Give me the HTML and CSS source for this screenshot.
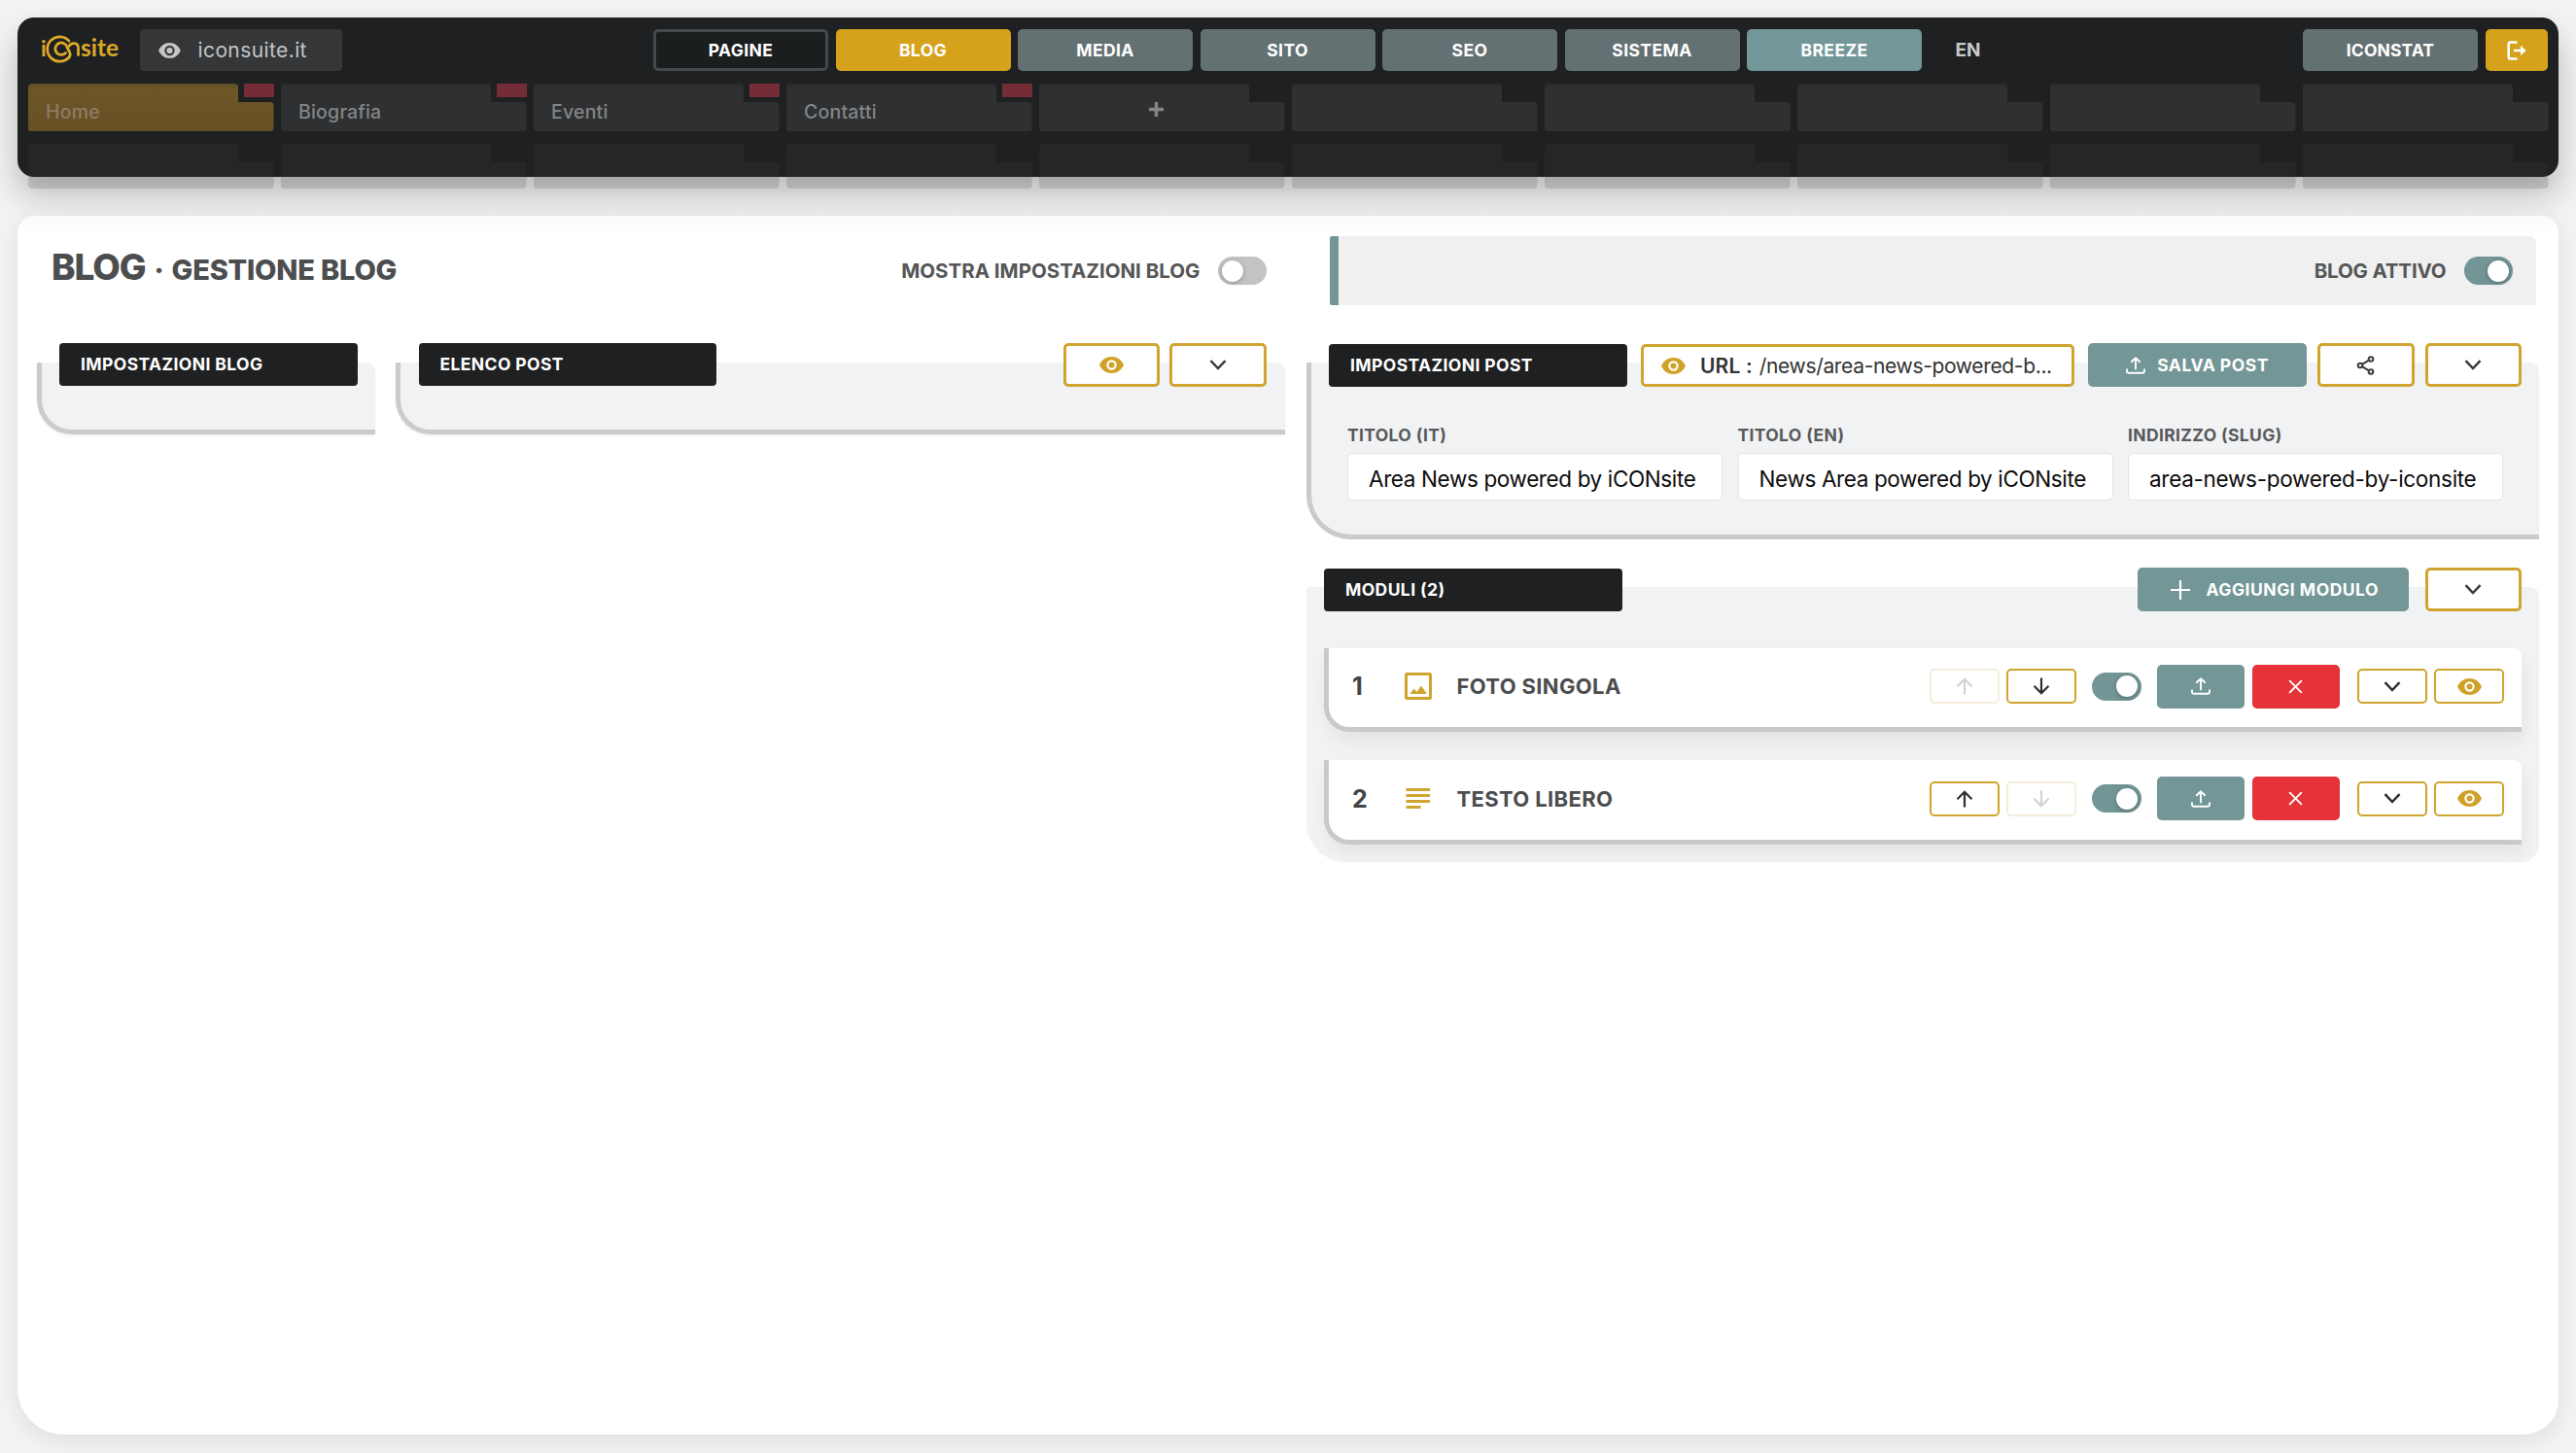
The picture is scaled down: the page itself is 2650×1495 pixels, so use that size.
FILE: index.html
```html
<!DOCTYPE html>
<html lang="it">
<head>
<meta charset="utf-8">
<title>iCONsite - Gestione blog</title>
<link rel="stylesheet" href="styles.css">
</head>
<body>
<svg class="sprite" width="0" height="0" aria-hidden="true">
  <symbol id="eye" viewBox="0 0 24 17"><path fill="currentColor" fill-rule="evenodd" d="M12 0C6.500 0 1.900 3.500 0 8.500 1.900 13.500 6.500 17 12 17s10.100-3.500 12-8.500C22.100 3.500 17.500 0 12 0Zm0 14a5.500 5.500 0 1 1 0-11 5.500 5.500 0 0 1 0 11Zm0-2.200a3.300 3.300 0 1 0 0-6.600 3.300 3.300 0 0 0 0 6.600Z"/></symbol>
  <symbol id="eye-gold" viewBox="0 0 25 17"><path fill="currentColor" fill-rule="evenodd" d="M12.500 0C7 0 2.200 3.300 0 8.500 2.200 13.700 7 17 12.500 17S22.800 13.700 25 8.500C22.800 3.300 18 0 12.500 0Zm0 13.700a5.200 5.200 0 1 1 0-10.400 5.200 5.200 0 0 1 0 10.400Zm0-2.200a3 3 0 1 0 0-6 3 3 0 0 0 0 6Z"/></symbol>
  <symbol id="chevron" viewBox="0 0 18 11"><path fill="none" stroke="currentColor" stroke-width="2.500" d="M1.500 1.200 9 9 16.500 1.200"/></symbol>
  <symbol id="up" viewBox="0 0 18 18"><path fill="none" stroke="currentColor" stroke-width="2.200" d="M9 17.500V2M1.500 9.300 9 1.800l7.500 7.500"/></symbol>
  <symbol id="down" viewBox="0 0 18 18"><path fill="none" stroke="currentColor" stroke-width="2.200" d="M9 .5V16M1.500 8.700 9 16.200l7.500-7.500"/></symbol>
  <symbol id="upload" viewBox="0 0 20 18"><path fill="none" stroke="currentColor" stroke-width="1.900" stroke-linecap="round" stroke-linejoin="round" d="M1 13.200V15a1.800 1.800 0 0 0 1.800 1.800h14.400A1.800 1.800 0 0 0 19 15v-1.800M10 12.500V1.500M5.800 5.200 10 1.200l4.200 4"/></symbol>
  <symbol id="cross" viewBox="0 0 16 16"><path fill="none" stroke="currentColor" stroke-width="2" d="m1.200 1.200 13.600 13.600m0-13.600L1.200 14.800"/></symbol>
</svg>

<header class="topbar">
  <div class="bar">
    <svg class="logo" viewBox="0 0 84 30" aria-label="iConsite">
      <g fill="none" stroke="currentColor" stroke-width="2.800" stroke-linecap="round">
        <path d="M31 6.200A12.700 12.700 0 1 0 31 22.800"/>
        <path d="M27.500 18.500A6.200 6.200 0 1 1 29 12.500L31.500 17.500C33.500 21 31 24 28.500 25"/>
        <path d="M31 11.500C33 7.500 40.500 7 40.500 13.500V20.500"/>
      </g>
      <g fill="currentColor" font-family="Lato, sans-serif" font-weight="700" font-size="24">
        <text x="2" y="21.500" font-size="22">i</text>
        <text x="43" y="21.500" textLength="39" lengthAdjust="spacingAndGlyphs">site</text>
      </g>
    </svg>
    <div class="domain"><svg><use href="#eye"/></svg><span>iconsuite.it</span></div>
    <nav class="menu">
      <a class="outline">PAGINE</a><a class="gold">BLOG</a><a>MEDIA</a><a>SITO</a><a>SEO</a><a>SISTEMA</a><a class="teal">BREEZE</a>
      <span class="lang">EN</span>
    </nav>
    <div class="tools">
      <a class="stat">ICONSTAT</a>
      <a class="exit"><svg viewBox="0 0 20 20"><path fill="none" stroke="currentColor" stroke-width="2.600" d="M10.500 1.500H3.500Q1.700 1.500 1.700 3.300V16.700Q1.700 18.500 3.500 18.500H10.500M7 10H16"/><path fill="currentColor" d="m14 4.800 5.600 5.200-5.600 5.200Z"/></svg></a>
    </div>
  </div>
  <div class="tabs">
    <div class="cell"><div class="tab current">Home</div><i class="flag"></i></div>
    <div class="cell"><div class="tab">Biografia</div><i class="flag"></i></div>
    <div class="cell"><div class="tab">Eventi</div><i class="flag"></i></div>
    <div class="cell"><div class="tab">Contatti</div><i class="flag"></i></div>
    <div class="cell"><div class="tab add"><svg viewBox="0 0 16 16"><path stroke="currentColor" stroke-width="3.600" d="M8 0V16M0 8H16"/></svg></div></div>
    <div class="cell"><div class="tab"></div></div>
    <div class="cell"><div class="tab"></div></div>
    <div class="cell"><div class="tab"></div></div>
    <div class="cell"><div class="tab"></div></div>
    <div class="cell"><div class="tab"></div></div>
  </div>
  <div class="tabs ghost">
    <div class="tab"></div><div class="tab"></div><div class="tab"></div><div class="tab"></div><div class="tab"></div>
    <div class="tab"></div><div class="tab"></div><div class="tab"></div><div class="tab"></div><div class="tab"></div>
  </div>
</header>

<main class="page">
  <div class="column">
    <div class="heading">
      <h1>BLOG<small class="dot">·</small><small>GESTIONE BLOG</small></h1>
      <span class="switch-label">MOSTRA IMPOSTAZIONI BLOG</span>
      <span class="switch off"></span>
    </div>
    <div class="pair">
      <section class="panel closed">
        <div class="head"><h2 class="tag">IMPOSTAZIONI BLOG</h2></div>
      </section>
      <section class="panel closed list">
        <div class="head"><h2 class="tag">ELENCO POST</h2>
          <div class="actions"><button class="btn line"><svg class="i-eye"><use href="#eye-gold"/></svg></button><button class="btn line"><svg class="i-chev"><use href="#chevron"/></svg></button></div>
        </div>
      </section>
    </div>
  </div>

  <div class="column">
    <div class="status"><span class="switch-label">BLOG ATTIVO</span><span class="switch"></span></div>
    <section class="panel post">
      <div class="head"><h2 class="tag">IMPOSTAZIONI POST</h2>
        <div class="actions">
          <div class="url"><svg class="i-eye"><use href="#eye-gold"/></svg><b>URL :</b><span>/news/area-news-powered-b...</span></div>
          <button class="btn fill save"><svg class="i-upload"><use href="#upload"/></svg><span>SALVA POST</span></button>
          <button class="btn line"><svg class="i-share" viewBox="0 0 18 20"><g fill="none" stroke="currentColor" stroke-width="2"><circle cx="14.500" cy="3.500" r="2.300"/><circle cx="3.500" cy="10" r="2.300"/><circle cx="14.500" cy="16.500" r="2.300"/><path d="m5.500 8.800 7-4.100M5.500 11.200l7 4.100"/></g></svg></button>
          <button class="btn line"><svg class="i-chev"><use href="#chevron"/></svg></button>
        </div>
      </div>
      <div class="fields">
        <div class="field"><label>TITOLO (IT)</label><div class="input">Area News powered by iCONsite</div></div>
        <div class="field"><label>TITOLO (EN)</label><div class="input">News Area powered by iCONsite</div></div>
        <div class="field"><label>INDIRIZZO (SLUG)</label><div class="input slug">area-news-powered-by-iconsite</div></div>
      </div>
    </section>

    <section class="panel modules">
      <div class="head"><h2 class="tag">MODULI (2)</h2>
        <div class="actions">
          <button class="btn fill add-module"><svg class="i-plus" viewBox="0 0 20 20"><path stroke="currentColor" stroke-width="2.200" d="M10 0V20M0 10H20"/></svg><span>AGGIUNGI MODULO</span></button>
          <button class="btn line"><svg class="i-chev"><use href="#chevron"/></svg></button>
        </div>
      </div>
      <div class="rows">
        <article class="module">
          <b class="num">1</b>
          <svg class="kind" viewBox="0 0 30 30"><path fill="none" stroke="currentColor" stroke-width="3" d="M3.500 2.500h23q1 0 1 1v23q0 1-1 1h-23q-1 0-1-1v-23q0-1 1-1Z"/><path fill="currentColor" d="m6.500 23 4-5.500 3 3.500 4.500-6.500 6 8.500Z"/></svg>
          <h3>FOTO SINGOLA</h3>
          <button class="btn small faded"><svg class="i-arrow"><use href="#up"/></svg></button>
          <button class="btn small"><svg class="i-arrow"><use href="#down"/></svg></button>
          <span class="switch"></span>
          <button class="btn fill act"><svg class="i-upload"><use href="#upload"/></svg></button>
          <button class="btn fill act red"><svg class="i-cross"><use href="#cross"/></svg></button>
          <button class="btn small gap"><svg class="i-chev"><use href="#chevron"/></svg></button>
          <button class="btn small"><svg class="i-eye"><use href="#eye-gold"/></svg></button>
        </article>
        <article class="module">
          <b class="num">2</b>
          <svg class="kind" viewBox="0 0 30 30"><path stroke="currentColor" stroke-width="3" d="M2.500 5.400H27M2.500 11.400H27M2.500 17.400H27M2.500 23.400H17.500"/></svg>
          <h3>TESTO LIBERO</h3>
          <button class="btn small"><svg class="i-arrow"><use href="#up"/></svg></button>
          <button class="btn small faded"><svg class="i-arrow"><use href="#down"/></svg></button>
          <span class="switch"></span>
          <button class="btn fill act"><svg class="i-upload"><use href="#upload"/></svg></button>
          <button class="btn fill act red"><svg class="i-cross"><use href="#cross"/></svg></button>
          <button class="btn small gap"><svg class="i-chev"><use href="#chevron"/></svg></button>
          <button class="btn small"><svg class="i-eye"><use href="#eye-gold"/></svg></button>
        </article>
      </div>
    </section>
  </div>
</main>
</body>
</html>
```
FILE: styles.css
```css
* { box-sizing: border-box; }
body {
  margin: 0;
  padding: 18px 18px 0;
  height: 1495px;
  overflow: hidden;
  background: #f3f3f3;
  font-family: Inter, "Liberation Sans", sans-serif;
  color: #4c4d4e;
}
.sprite { display: block; }
h1, h2, h3 { margin: 0; }
svg { display: block; flex: none; }
button { font: inherit; padding: 0; margin: 0; }

/* top bar */
.topbar {
  position: relative;
  height: 164px;
  padding: 12px 11px 0;
  border-radius: 17px;
  background: #1e2022;
  box-shadow: 0 18px 34px rgba(0, 0, 0, .24);
}
.bar { display: flex; height: 43px; align-items: stretch; }
.logo { width: 84px; height: 30px; margin: 6px 0 0 11px; color: #dba827; overflow: visible; }
.domain {
  display: flex;
  align-items: center;
  width: 208px;
  margin-left: 19.500px;
  padding-left: 19px;
  border-radius: 4px;
  background: #343638;
  color: #c3c5c7;
  font-size: 21px;
  letter-spacing: .4px;
}
.domain svg { width: 23px; height: 16px; margin-right: 18px; }
.menu { display: flex; gap: 7.500px; margin-left: 320.500px; }
.menu a, .tools a {
  display: flex;
  align-items: center;
  justify-content: center;
  width: 180px;
  border-radius: 5px;
  background: #647173;
  color: #fff;
  font-weight: 700;
  font-size: 17.500px;
  letter-spacing: .4px;
}
.menu .outline { background: #1b1e1f; border: 3px solid #46494b; }
.menu .gold { background: #d6a21b; }
.menu .teal { background: #739798; }
.lang { align-self: center; margin-left: 27px; color: #c9cacb; font-weight: 700; font-size: 19px; }
.tools { display: flex; gap: 7.500px; margin-left: auto; }
.tools .stat { letter-spacing: .1px; }
.tools .exit { width: 64.500px; background: #d6a21b; }
.exit svg { width: 20px; height: 20px; }

.tabs { display: grid; grid-template-columns: repeat(10, 252.500px); column-gap: 7.500px; margin-top: 13px; }
.cell { position: relative; }
.tab {
  display: flex;
  align-items: center;
  height: 49px;
  padding: 9px 0 0 18px;
  background: linear-gradient(#292b2d, #2e3032 6px);
  clip-path: path("M4 0H212Q216 0 216 4V19H248.500Q252.500 19 252.500 23V46Q252.500 49 249.500 49H3Q0 49 0 46V4Q0 0 4 0Z");
  color: #838587;
  font-weight: 500;
  font-size: 19.500px;
  letter-spacing: .2px;
}
.tab.current { background: linear-gradient(#5e4e27, #6c5626 6px, #685025); color: #8d7b68; }
.tab.add { justify-content: center; padding: 4px 12px 0 0; }
.add svg { width: 15px; height: 15px; }
.flag { position: absolute; right: 0; top: 0; width: 31px; height: 14px; background: #742d36; }
.ghost .tab {
  height: 46px;
  background: rgba(64, 67, 68, .18);
  clip-path: path("M4 0H216V19H252.500V42Q252.500 46 248.500 46H4Q0 46 0 42V4Q0 0 4 0Z");
}

/* page */
.page {
  position: relative;
  display: flex;
  gap: 22px;
  height: 1254px;
  margin-top: 40px;
  padding: 21px 20px 0;
  border-radius: 18px 18px 36px 48px;
  background: linear-gradient(#fafafa, #fff 22px);
  box-shadow: 0 6px 24px rgba(0, 0, 0, .09);
}
.column:first-child { width: 1284px; }
.column:last-child { width: 1268px; }
.heading { display: flex; align-items: center; height: 71px; padding: 0 19px 0 15px; }
h1 { display: flex; align-items: baseline; margin-right: auto; padding-bottom: 8px; font-size: 37px; font-weight: 800; letter-spacing: -1.100px; }
h1 small { font-size: 29px; letter-spacing: -.200px; }
.dot { margin: 0 8px 0 9px; }
.switch-label { font-weight: 700; font-size: 20.500px; color: #555657; }
.switch { position: relative; width: 50.500px; height: 29px; border-radius: 15px; background: #739596; flex: none; }
.switch::after { content: ""; position: absolute; right: 4px; top: 3.500px; width: 22px; height: 22px; border-radius: 50%; background: #fff; box-shadow: 0 1px 4px rgba(0, 0, 0, .3); }
.switch.off { background: #c3c3c3; }
.switch.off::after { right: auto; left: 4px; }
.switch-label + .switch { margin-left: 18px; }
.status {
  display: flex;
  align-items: center;
  justify-content: flex-end;
  height: 71px;
  margin: 0 3px 0 24px;
  padding-right: 24px;
  border-left: 9.500px solid #739596;
  border-radius: 2px 8px 0 2px;
  background: #f0f0f0;
}
.status .switch-label { letter-spacing: -.15px; }

.pair { display: grid; grid-template-columns: 348px 915px; gap: 21px; }
.panel {
  display: flow-root;
  margin-top: 59px;
  padding: 0 18px;
  border: solid #cbcbcb;
  border-width: 0 0 5px 5px;
  border-radius: 0 9px 0 36px;
  background: #f1f2f4;
}
.panel.closed { height: 74px; box-shadow: 0 2px 3px rgba(0, 0, 0, .05); }
.panel.list { padding: 0 19.500px 0 18.500px; }
.list .actions { gap: 10px; }
.panel.post { height: 182px; border-bottom-left-radius: 46px; }
.post .tag { margin-top: 1px; }
.head { display: flex; align-items: flex-start; height: 45px; margin-top: -20px; }
.tag {
  display: flex;
  align-items: center;
  width: 306.500px;
  height: 43.500px;
  padding-left: 22px;
  border-radius: 4px;
  background: #1e2022;
  color: #fff;
  font-size: 17.500px;
  letter-spacing: .4px;
}
.actions { display: flex; gap: 11px; margin-left: auto; }
.btn { display: flex; align-items: center; justify-content: center; height: 45px; border: 0; border-radius: 5px; color: #3a3b3c; }
.btn.line { width: 99.500px; border: 3px solid #cfa42f; background: #fff; }
.btn.fill { background: #739697; color: #fff; font-weight: 700; font-size: 17.500px; letter-spacing: .5px; }
.save { width: 225px; }
.save svg { margin-right: 12px; }
.add-module { width: 279.500px; padding-left: 3px; }
.add-module svg { margin-right: 17px; }
.i-eye { width: 25px; height: 17px; color: #cfa129; }
.i-chev { width: 18px; height: 11px; }
.i-arrow { width: 18px; height: 18px; }
.i-upload { width: 20px; height: 18px; }
.i-cross { width: 15px; height: 15px; }
.i-share { width: 19px; height: 20px; }
.i-plus { width: 20px; height: 20px; }
.url {
  display: flex;
  align-items: center;
  width: 446px;
  height: 44px;
  margin: 1px 3px 0 0;
  padding-left: 18px;
  border: 3px solid #cfa42f;
  border-radius: 5px;
  background: #fff;
  color: #333;
  font-size: 21px;
  letter-spacing: -.34px;
  white-space: nowrap;
}
.url b { margin: 0 7px 0 15px; font-weight: 600; letter-spacing: .15px; }

.fields { display: grid; grid-template-columns: repeat(3, 386px); gap: 15.500px; margin: 38px 0 0 19px; }
.field label { display: block; height: 30px; line-height: 23px; font-weight: 700; font-size: 17.500px; letter-spacing: .35px; color: #58595a; }
.input {
  display: flex;
  align-items: center;
  height: 49px;
  padding: 3px 0 0 21px;
  border: 1.500px solid #e3e4e6;
  border-radius: 5px;
  background: #fff;
  color: #0c0c0c;
  font-size: 22.500px;
  letter-spacing: -.38px;
  white-space: nowrap;
}
.input.slug { letter-spacing: -.3px; }

.panel.modules { height: 283px; margin-top: 49px; border: 0; border-radius: 4px 9px 18px 40px; }
.modules .tag { margin-top: 1px; }
.modules .actions { gap: 16.500px; }
.rows { display: grid; gap: 29px; margin-top: 37.500px; }
.module {
  display: flex;
  align-items: center;
  height: 86.500px;
  padding: 0 18px 2px 24px;
  border: solid #c9c9ca;
  border-width: 0 0 5px 5px;
  border-radius: 0 8px 0 26px;
  background: #fff;
  box-shadow: 3px 10px 18px rgba(0, 0, 0, .06);
}
.num { width: 53px; font-size: 25px; color: #444; }
.kind { width: 30px; height: 30px; color: #cfa42f; }
h3 { margin: 0 auto 0 24.500px; font-size: 22px; letter-spacing: .35px; }
.btn.small { width: 72px; height: 36px; margin-left: 7.500px; border: 2px solid #cfa42f; background: #fff; color: #2e2f30; }
.btn.small.gap { margin-left: 18px; }
.btn.small.faded { border-color: #f4eddb; color: #d2d2d2; }
.module .switch { margin: 0 16.500px 0 16px; }
.act { width: 90px; }
.act.red { margin-left: 7.500px; background: #e53339; }
```
